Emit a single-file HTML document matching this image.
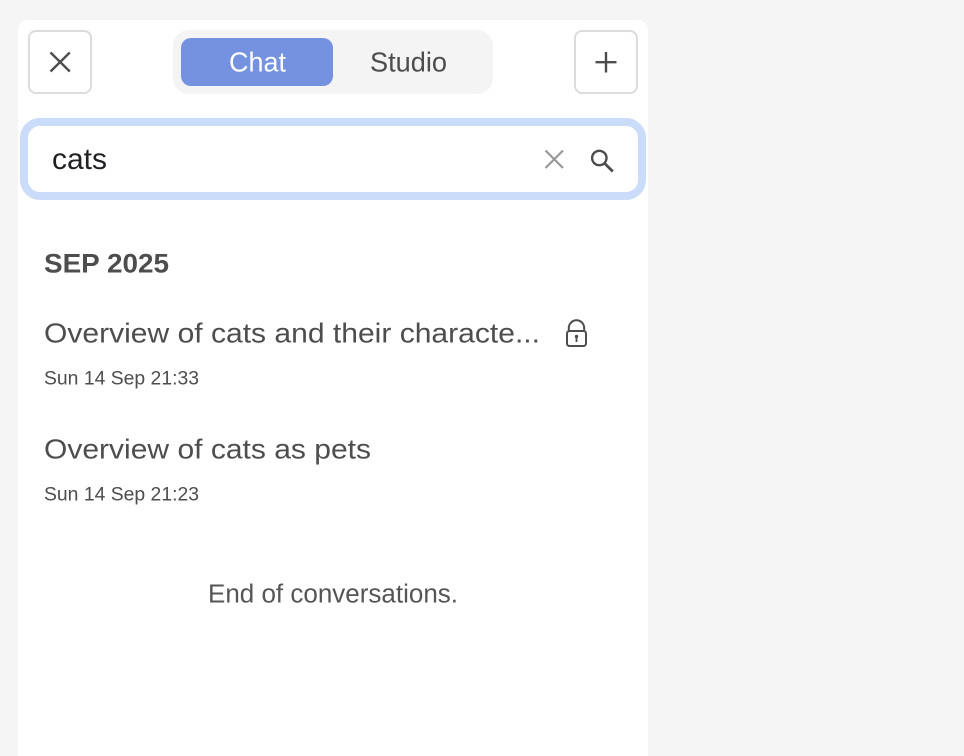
<!DOCTYPE html>
<html><head><meta charset="utf-8"><style>
html,body{margin:0;padding:0;width:964px;height:756px;overflow:hidden;background:#f5f5f5}
svg{position:absolute;left:0;top:0;display:block}
text{font-family:"Liberation Sans",sans-serif;fill:#4d4d4d}
</style></head><body>
<svg width="964" height="756" viewBox="0 0 964 756" xmlns="http://www.w3.org/2000/svg">
<path d="M18 756V30a10 10 0 0 1 10-10H638a10 10 0 0 1 10 10V756Z" fill="#fff"/>
<rect x="29" y="31" width="62" height="62" rx="7" fill="#fff" stroke="#dcdcdc" stroke-width="2"/>
<path d="M50.500 52.500L69.800 71.500M69.800 52.500L50.500 71.500" fill="none" stroke="#4d4d4d" stroke-width="2.400"/>
<rect x="173" y="30" width="320" height="64" rx="16" fill="#f4f4f4"/>
<rect x="181" y="38" width="152" height="48" rx="10" fill="#7492df"/>
<text x="229" y="71.500" font-size="27.500" textLength="57" lengthAdjust="spacingAndGlyphs" style="fill:#fff">Chat</text>
<text x="370" y="71.500" font-size="27.500" textLength="77" lengthAdjust="spacingAndGlyphs">Studio</text>
<rect x="575" y="31" width="62" height="62" rx="7" fill="#fff" stroke="#dcdcdc" stroke-width="2"/>
<path d="M606 52V72.500M595.500 62.200H616.500" fill="none" stroke="#4d4d4d" stroke-width="2.400"/>
<rect x="24" y="122" width="618" height="74" rx="16" fill="#fff" stroke="#cbdcfa" stroke-width="8"/>
<text x="52" y="169" font-size="29.500" textLength="55" lengthAdjust="spacingAndGlyphs" style="fill:#202124">cats</text>
<path d="M545.500 150.500L563 168M563 150.500L545.500 168" fill="none" stroke="#999" stroke-width="2.200"/>
<circle cx="599.300" cy="158" r="7.200" fill="none" stroke="#4d4d4d" stroke-width="2.400"/>
<path d="M604.500 163.200L612.800 171.500" fill="none" stroke="#4d4d4d" stroke-width="2.800"/>
<text x="44" y="272.500" font-size="27" font-weight="700" textLength="125" lengthAdjust="spacingAndGlyphs">SEP 2025</text>
<text x="44" y="342.500" font-size="28" textLength="496" lengthAdjust="spacingAndGlyphs">Overview of cats and their characte...</text>
<path d="M568.800 331V328a7.700 7.700 0 0 1 15.400 0V331" fill="none" stroke="#4d4d4d" stroke-width="2"/>
<rect x="567" y="331" width="19" height="15" rx="2.500" fill="none" stroke="#4d4d4d" stroke-width="2"/>
<circle cx="576.500" cy="336.500" r="1.700" fill="#4d4d4d"/>
<rect x="575.600" y="337" width="1.800" height="5" fill="#4d4d4d"/>
<text x="44" y="384.500" font-size="19" textLength="155" lengthAdjust="spacingAndGlyphs">Sun 14 Sep 21:33</text>
<text x="44" y="458.500" font-size="28" textLength="327" lengthAdjust="spacingAndGlyphs">Overview of cats as pets</text>
<text x="44" y="500.500" font-size="19" textLength="155" lengthAdjust="spacingAndGlyphs">Sun 14 Sep 21:23</text>
<text x="208" y="602.500" font-size="25.500" textLength="250" lengthAdjust="spacingAndGlyphs" style="fill:#555">End of conversations.</text>
</svg>
</body></html>
